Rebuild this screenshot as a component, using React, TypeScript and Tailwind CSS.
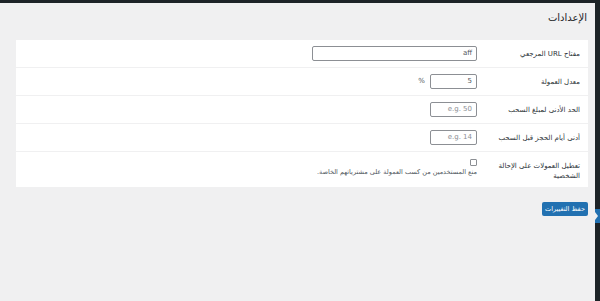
import React from "react";

const font = { fontFamily: '"DejaVu Sans", "Liberation Sans", sans-serif' };

function Row({
  label,
  children,
  last,
}: {
  label: React.ReactNode;
  children: React.ReactNode;
  last?: boolean;
}) {
  return (
    <div
      className={
        last
          ? "flex min-h-[35px] items-start"
          : "flex h-[28px] items-center border-b border-[#f0f0f1]"
      }
    >
      <div
        className={[
          "w-[111px] shrink-0 pr-[8px] text-[7px] leading-[10px] text-[#2c3338]",
          last ? "pt-[9px]" : "",
        ].join(" ")}
      >
        {label}
      </div>
      <div className="flex-1">{children}</div>
    </div>
  );
}

function Field({
  value,
  placeholder,
  width,
}: {
  value?: string;
  placeholder?: string;
  width: string;
}) {
  return (
    <div
      className={`flex h-[15px] ${width} items-center rounded-[2px] border border-[#8c8f94] bg-white px-[4px] text-[7px]`}
    >
      {value ? (
        <span className="text-[#50575e]">{value}</span>
      ) : (
        <span className="text-[#8c8f94]">{placeholder}</span>
      )}
    </div>
  );
}

export default function App() {
  return (
    <div
      dir="rtl"
      style={font}
      className="relative flex h-[301px] w-[600px] flex-col overflow-hidden bg-[#f0f0f1]"
    >
      <div className="h-[3px] w-full shrink-0 bg-[#1d2327]" />
      <div className="flex flex-1">
        {/* admin menu strip */}
        <div className="relative w-[5px] shrink-0 bg-[#1d2327]">
          <div className="absolute left-0 top-[206px] h-[14px] w-[5px] bg-[#2271b1]" />
          <div className="absolute left-0 top-[209px] h-0 w-0 border-y-[4px] border-l-[3px] border-y-transparent border-l-[#f0f0f1]" />
        </div>

        <div className="flex-1 pl-[16px] pr-[7px]">
          <h1 className="mt-[9px] pr-[1px] text-[10px] leading-[12px] text-[#1d2327]">
            الإعدادات
          </h1>

          <div className="mt-[16px] bg-white">
            <Row label="مفتاح URL المرجعي">
              <Field value="aff" width="w-[165px]" />
            </Row>
            <Row label="معدل العمولة">
              <div className="flex items-center gap-[5px]">
                <Field value="5" width="w-[47px]" />
                <span className="text-[7px] text-[#50575e]">%</span>
              </div>
            </Row>
            <Row label="الحد الأدنى لمبلغ السحب">
              <Field placeholder="e.g. 50" width="w-[47px]" />
            </Row>
            <Row label="أدنى أيام الحجز قبل السحب">
              <Field placeholder="e.g. 14" width="w-[47px]" />
            </Row>
            <Row
              last
              label={
                <>
                  تعطيل العمولات على الإحالة
                  <br />
                  الشخصية
                </>
              }
            >
              <div className="pt-[7px]">
                <div className="h-[7px] w-[7px] rounded-[1px] border border-[#8c8f94] bg-white" />
                <p className="mt-[2px] text-[6.5px] leading-[9px] text-[#50575e]">
                  منع المستخدمين من كسب العمولة على مشترياتهم الخاصة.
                </p>
              </div>
            </Row>
          </div>

          <div className="mt-[15px] flex">
            <button className="h-[14px] w-[46px] rounded-[2px] bg-[#2271b1] text-[6.5px] leading-[14px] text-white">
              حفظ التغييرات
            </button>
          </div>
        </div>
      </div>
    </div>
  );
}
